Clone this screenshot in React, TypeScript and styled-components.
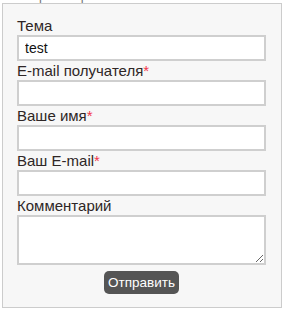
import React from 'react'
import styled, { createGlobalStyle } from 'styled-components'

const Global = createGlobalStyle`
  html, body {
    margin: 0;
    padding: 0;
    background: #ffffff;
  }
  body {
    font-family: "Liberation Sans", Arial, sans-serif;
  }
`

export default function App() {
  return (
    <>
      <Global />
      <Page>
        <Caption>
          <span>Форма обратной связи</span>
        </Caption>
        <Panel>
          <Field label="Тема" value="test" />
          <Field label="E-mail получателя" required />
          <Field label="Ваше имя" required />
          <Field label="Ваш E-mail" required />
          <Label>Комментарий</Label>
          <Comment />
          <Actions>
            <Submit type="button">Отправить</Submit>
          </Actions>
        </Panel>
      </Page>
    </>
  )
}

function Field({ label, value, required }: { label: string; value?: string; required?: boolean }) {
  return (
    <>
      <Label>
        {label}
        {required && <Star>*</Star>}
      </Label>
      <Input type="text" defaultValue={value} />
    </>
  )
}

///////////////////////////////////////////////////////////////////////////////////

const Page = styled.div`
  width: 284px;
  padding-left: 2px;
`

const Caption = styled.div`
  height: 3px;
  overflow: hidden;
  display: flex;
  align-items: flex-end;
  padding-left: 20px;

  span {
    font-family: "Liberation Sans", Arial, sans-serif;
    font-size: 13px;
    line-height: 15px;
    color: #777;
  }
`

const Panel = styled.div`
  box-sizing: border-box;
  width: 280px;
  background: #f7f7f7;
  border: 1px solid #cccccc;
  padding: 12px 15px 13px 14px;
`

const Label = styled.div`
  font-family: "Liberation Sans", Arial, sans-serif;
  font-size: 15px;
  line-height: 19px;
  color: #2e2626;
  white-space: nowrap;
`

const Star = styled.span`
  color: #f2364a;
`

const Input = styled.input`
  display: block;
  box-sizing: border-box;
  width: 249px;
  height: 26px;
  margin: 0;
  padding: 0 6px;
  border: 2px solid #cfcfcf;
  background: #ffffff;
  font-family: "Liberation Sans", Arial, sans-serif;
  font-size: 14px;
  color: #111;
  outline: none;
`

const Comment = styled.textarea`
  display: block;
  box-sizing: border-box;
  width: 249px;
  height: 50px;
  margin: 0;
  padding: 4px 6px;
  border: 2px solid #cfcfcf;
  background: #ffffff;
  font-family: "Liberation Sans", Arial, sans-serif;
  font-size: 14px;
  outline: none;
`

const Actions = styled.div`
  display: flex;
  justify-content: center;
  padding-top: 6px;
`

const Submit = styled.button`
  height: 23px;
  margin: 0;
  padding: 0 4px;
  border: none;
  border-radius: 5px;
  background: #555555;
  color: #ffffff;
  font-family: "Liberation Sans", Arial, sans-serif;
  font-size: 13.5px;
  line-height: 23px;
  cursor: pointer;
`
